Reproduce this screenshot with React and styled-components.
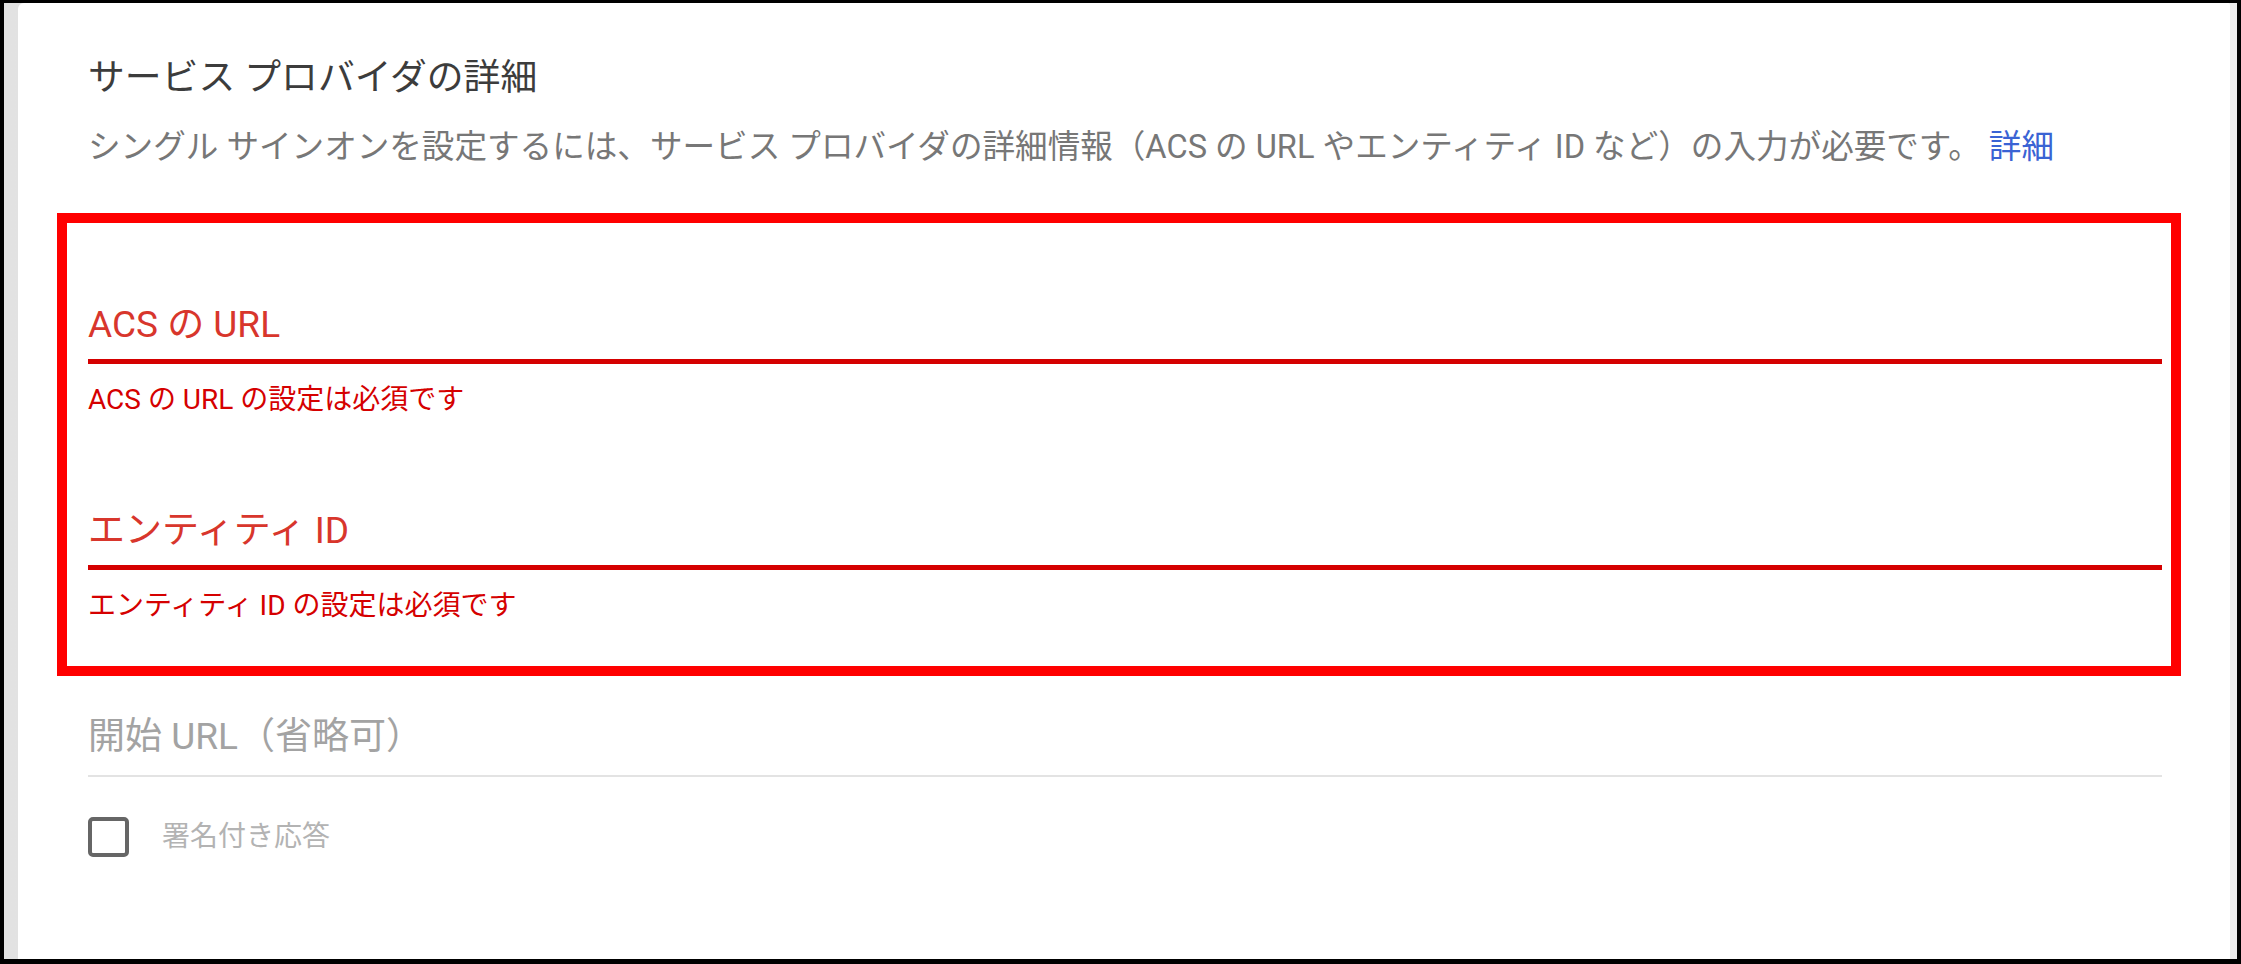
import React, { useState } from 'react'
import styled, { createGlobalStyle } from 'styled-components'

const GlobalStyle = createGlobalStyle`
  html, body {
    margin: 0;
    padding: 0;
    background: #ffffff;
  }
  * {
    box-sizing: border-box;
  }
`;

const fields = [
  { label: 'ACS の URL', error: 'ACS の URL の設定は必須です' },
  { label: 'エンティティ ID', error: 'エンティティ ID の設定は必須です' },
];

const App = () => {
  const [signed, setSigned] = useState(false);

  return (
    <>
      <GlobalStyle />
      <Frame>
        <Card>
          <SectionTitle>サービス プロバイダの詳細</SectionTitle>
          <Description>
            シングル サインオンを設定するには、サービス プロバイダの詳細情報（ACS の URL やエンティティ ID など）の入力が必要です。 <HelpLink href="#">詳細</HelpLink>
          </Description>
          <Highlight>
            {fields.map((f) => (
              <Field key={f.label}>
                <FieldLabel error>{f.label}</FieldLabel>
                <Underline error />
                <ErrorText>{f.error}</ErrorText>
              </Field>
            ))}
          </Highlight>
          <Field>
            <FieldLabel>開始 URL（省略可）</FieldLabel>
            <Underline />
          </Field>
          <CheckRow onClick={() => setSigned(!signed)}>
            <CheckBox checked={signed} />
            <CheckLabel>署名付き応答</CheckLabel>
          </CheckRow>
        </Card>
      </Frame>
    </>
  )
}

export default App

const Frame = styled.div`
  width: 2241px;
  height: 964px;
  border: 4px solid #000;
  border-top-width: 3px;
  border-bottom-width: 5px;
  background: linear-gradient(90deg, #e2e2e2 0%, #ececec 100%);
  padding: 0 7px 0 14px;
  overflow: hidden;
  font-family: Roboto, "Noto Sans CJK JP", sans-serif;
`;

const Card = styled.div`
  height: 100%;
  background: #fff;
  border-top-left-radius: 6px;
  border-top-right-radius: 2px;
  padding: 51px 68px 0 70px;
  display: flex;
  flex-direction: column;
`;

const SectionTitle = styled.div`
  color: #3c3c3c;
  font-size: 36.8px;
  line-height: 48px;
  font-weight: 400;
`;

const Description = styled.div`
  margin-top: 23px;
  color: #777;
  font-size: 32.6px;
  line-height: 44px;
  white-space: nowrap;
`;

const HelpLink = styled.a`
  color: #3a63d4;
  text-decoration: none;
`;

const Highlight = styled.div`
  margin: 44px -19px 0 -31px;
  border: 10px solid #ff0000;
  padding: 78px 9px 42px 21px;
  display: flex;
  flex-direction: column;
  gap: 89px;
`;

const Field = styled.div`
  display: flex;
  flex-direction: column;
  ${Highlight} + & {
    margin-top: 37px;
  }
`;

const FieldLabel = styled.div`
  color: ${(p) => (p.error ? '#d8362c' : '#a3a3a3')};
  font-size: 37px;
  line-height: 48px;
`;

const Underline = styled.div`
  margin-top: ${(p) => (p.error ? '10px' : '14px')};
  height: ${(p) => (p.error ? '5px' : '2px')};
  background: ${(p) => (p.error ? '#d50000' : '#e3e3e3')};
`;

const ErrorText = styled.div`
  margin-top: 18px;
  color: #d50000;
  font-size: 28px;
  line-height: 36px;
`;

const CheckRow = styled.div`
  margin-top: 40px;
  display: flex;
  align-items: center;
  gap: 33px;
  cursor: pointer;
`;

const CheckBox = styled.div`
  width: 41px;
  height: 40px;
  border: 4px solid #666;
  border-radius: 5px;
  background: ${(p) => (p.checked ? '#666' : '#fff')};
`;

const CheckLabel = styled.div`
  color: #b3b3b3;
  font-size: 28px;
  line-height: 40px;
`;
